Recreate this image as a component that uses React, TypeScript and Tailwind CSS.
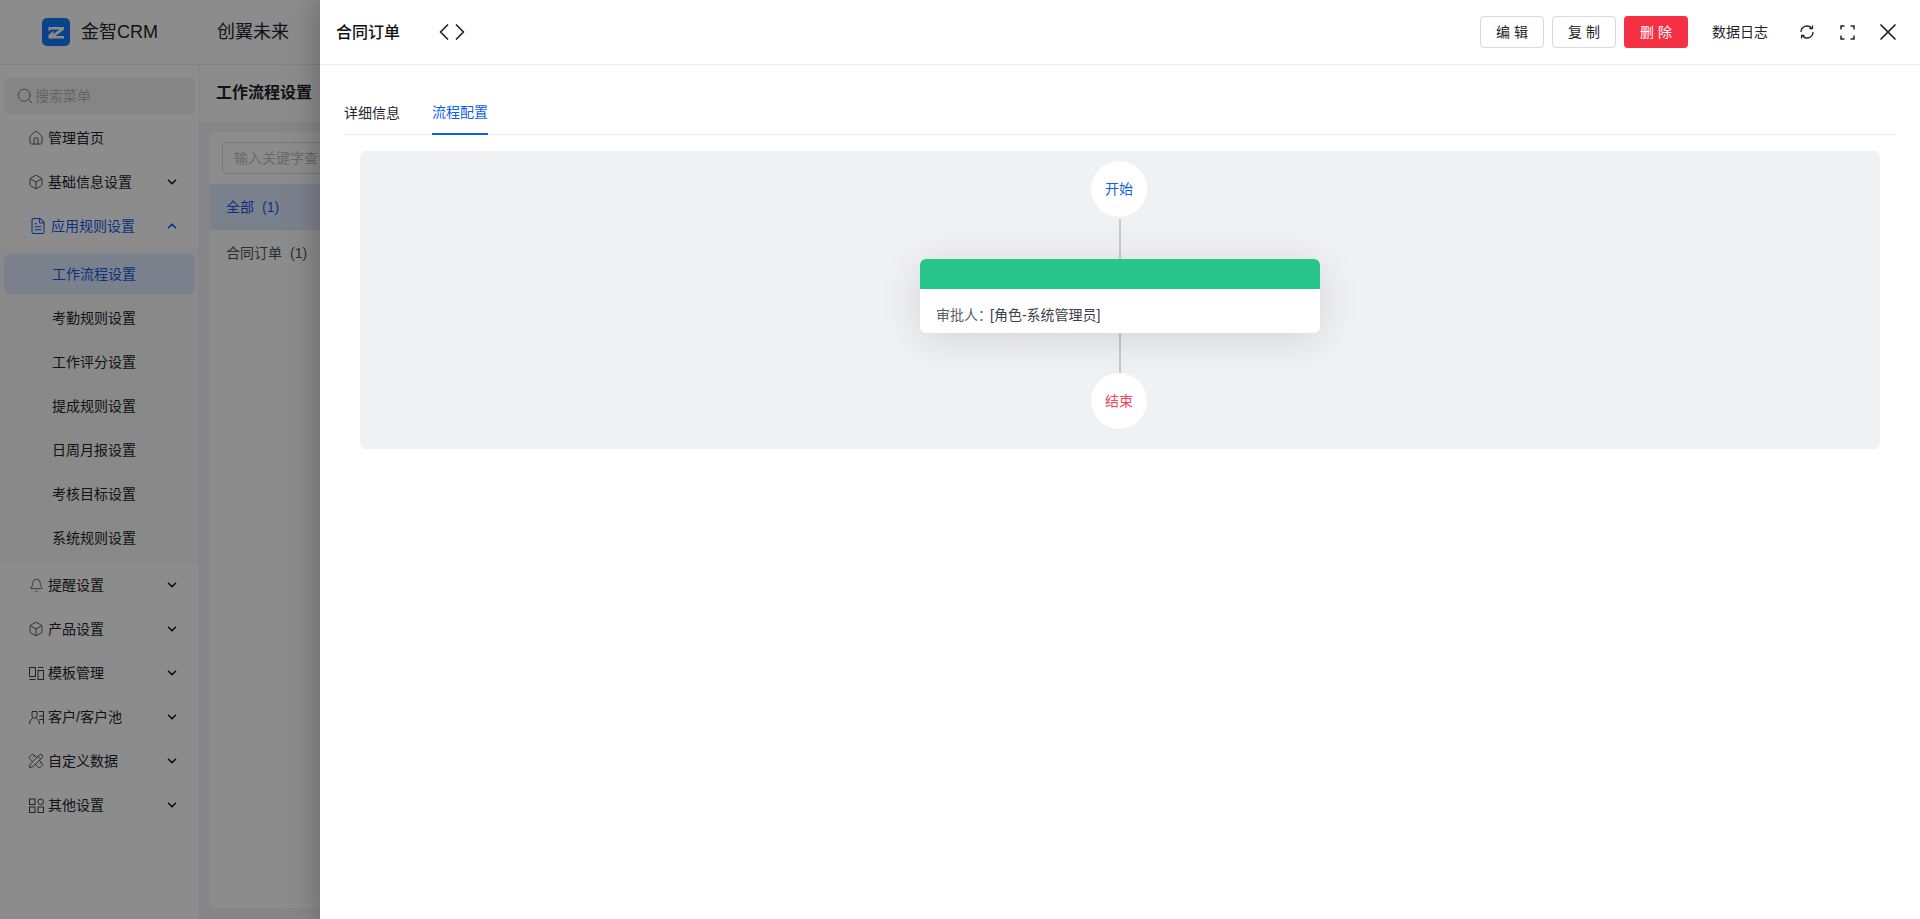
import { Bell, Box, ChevronDown, ChevronLeft, ChevronRight, ChevronUp, FileText, Home, PencilRuler, Search, X } from 'lucide-react'
import type { ReactNode } from 'react'

const font = '[font-family:"Liberation_Sans","Noto_Sans_CJK_SC",sans-serif]'

function TemplateIcon() {
  return (
    <svg width="15" height="15" viewBox="0 0 15 15" fill="none" stroke="currentColor" strokeWidth="1">
      <rect x="0.5" y="1.5" width="6" height="9" />
      <path d="M0.5 13.5h6" />
      <path d="M9 1.5h5.5" />
      <rect x="9" y="4.5" width="5.5" height="9" />
    </svg>
  )
}

function GridIcon() {
  return (
    <svg width="15" height="15" viewBox="0 0 15 15" fill="none" stroke="currentColor" strokeWidth="1">
      <rect x="0.5" y="1" width="5.5" height="5.5" />
      <rect x="0.5" y="9" width="5.5" height="5.5" />
      <rect x="9" y="9" width="5.5" height="5.5" />
      <circle cx="11.7" cy="3.8" r="2.8" />
    </svg>
  )
}

function CustomerIcon() {
  return (
    <svg width="15" height="15" viewBox="0 0 15 15" fill="none" stroke="currentColor" strokeWidth="1">
      <path d="M3 1.5h5v4.2a2.5 2.5 0 0 1-5 0z" />
      <path d="M0.5 14c.3-3 1.6-5 3-5.6M7.5 8.4c1.4.6 2.7 2.6 3 5.6" />
      <path d="M10 1.5h4.5v12.5M10.5 6h4M10.5 9.5h4" />
    </svg>
  )
}

function RefreshIcon() {
  return (
    <svg width="16" height="16" viewBox="0 0 16 16" fill="none" stroke="currentColor" strokeWidth="1.3">
      <path d="M2 8a6 6 0 0 1 10.4-4" />
      <path d="M14 8a6 6 0 0 1-10.4 4" />
      <path d="M13.4 1.6v3h-3" />
      <path d="M2.6 14.4v-3h3" />
    </svg>
  )
}

function CornersIcon() {
  return (
    <svg width="15" height="15" viewBox="0 0 15 15" fill="none" stroke="currentColor" strokeWidth="1.5">
      <path d="M1 4.5V1h3.5M10.5 1H14v3.5M14 10.5V14h-3.5M4.5 14H1v-3.5" />
    </svg>
  )
}

function Logo() {
  return (
    <svg width="28" height="28" viewBox="0 0 28 28">
      <rect width="28" height="28" rx="5" fill="#0f7aff" />
      <path d="M10 9h12v2.4L13.5 18H22v2.5H8.5v-2.3L17.6 11.5H8.5z" fill="#ffffff" />
      <path d="M6.5 9h3.2v1.6L6.5 13.4zM6.5 20.5v-3.4l5-4.3v2.8l-2.4 4.9z" fill="#ffffff" />
    </svg>
  )
}

const topMenus: { icon: ReactNode; label: string; arrow?: boolean }[] = [
  { icon: <Home size={16} strokeWidth={1.3} />, label: '管理首页' },
  { icon: <Box size={16} strokeWidth={1.3} />, label: '基础信息设置', arrow: true },
]

const subMenus = ['工作流程设置', '考勤规则设置', '工作评分设置', '提成规则设置', '日周月报设置', '考核目标设置', '系统规则设置']

const bottomMenus: { icon: ReactNode; label: string }[] = [
  { icon: <Bell size={15} strokeWidth={1.2} />, label: '提醒设置' },
  { icon: <Box size={16} strokeWidth={1.3} />, label: '产品设置' },
  { icon: <TemplateIcon />, label: '模板管理' },
  { icon: <CustomerIcon />, label: '客户/客户池' },
  { icon: <PencilRuler size={16} strokeWidth={1.3} />, label: '自定义数据' },
  { icon: <GridIcon />, label: '其他设置' },
]

function MenuRow({ icon, label, arrow }: { icon: ReactNode; label: string; arrow?: boolean }) {
  return (
    <div className="flex h-11 items-center pl-[28px] pr-[20px] text-sm text-[#1f2329]">
      <span className="mr-[4px] flex w-[16px] justify-center text-[#3c4149]">{icon}</span>
      <span className="flex-1">{label}</span>
      {arrow && <ChevronDown size={14} strokeWidth={3} />}
    </div>
  )
}

function Sidebar() {
  return (
    <aside className="flex w-[200px] shrink-0 flex-col border-r border-[#f0f0f0] bg-white">
      <div className="mx-[4px] mt-[13px] mb-[2px] flex h-[36px] items-center rounded bg-[#f2f3f5] pl-[12px] text-sm text-[#b3b7bd]">
        <Search size={18} strokeWidth={1.3} className="mr-[1px] text-[#71767d]" />
        搜索菜单
      </div>
      {topMenus.map((m) => (
        <MenuRow key={m.label} icon={m.icon} label={m.label} arrow={m.arrow} />
      ))}
      <div className="flex h-11 items-center pl-[29px] pr-[20px] text-sm text-[#0f5ce8]">
        <FileText size={18} strokeWidth={1.4} className="mr-[4px]" />
        <span className="flex-1">应用规则设置</span>
        <ChevronUp size={14} strokeWidth={3} />
      </div>
      <div className="flex flex-col bg-[#fafafa] pb-[3px]">
        {subMenus.map((s, i) => (
          <div key={s} className={i === 0 ? 'mx-[4px] mt-[6px] mb-[2px] flex h-[40px] items-center rounded-md bg-[#e1ecff] pl-[48px] text-sm text-[#0f5ce8]' : 'flex h-11 items-center pl-[52px] text-sm text-[#1f2329]'}>
            {s}
          </div>
        ))}
      </div>
      {bottomMenus.map((m) => (
        <MenuRow key={m.label} icon={m.icon} label={m.label} arrow />
      ))}
    </aside>
  )
}

function Background() {
  return (
    <div className="flex h-full flex-col bg-white">
      <header className="flex h-[65px] shrink-0 items-center border-b border-[#ededed] pl-[42px]">
        <Logo />
        <span className="ml-[11px] text-lg text-[#1f2329]">金智CRM</span>
        <span className="ml-[59px] text-lg text-[#1f2329]">创翼未来</span>
      </header>
      <div className="flex min-h-0 flex-1">
        <Sidebar />
        <main className="flex min-w-0 flex-1 flex-col bg-[#f4f5f7]">
          <div className="flex h-[57px] shrink-0 items-center bg-white pb-[1px] pl-[16px] text-base font-semibold text-[#1f2329]">工作流程设置</div>
          <div className="mt-[10px] ml-[10px] mb-[11px] flex flex-1 flex-col bg-white">
            <div className="px-[12px] py-[10px]">
              <div className="flex h-[32px] w-[300px] items-center rounded border border-[#d9d9d9] px-[11px] text-sm text-[#bfbfbf]">输入关键字查询</div>
            </div>
            <div className="flex h-[46px] items-center bg-[#e1ecff] pl-[16px] text-sm text-[#0f5ce8]">全部<span className="ml-[8px]">(1)</span></div>
            <div className="flex h-[46px] items-center pl-[16px] text-sm text-[#4e5359]">合同订单<span className="ml-[8px]">(1)</span></div>
          </div>
        </main>
      </div>
    </div>
  )
}

function OutlineButton({ children }: { children: ReactNode }) {
  return (
    <button className="flex h-[32px] w-[64px] items-center justify-center rounded border border-[#d9d9d9] bg-white text-sm text-[#1f2329]">{children}</button>
  )
}

function FlowNode({ label, color }: { label: string; color: string }) {
  return <div className={`-ml-[2px] flex h-[56px] w-[56px] items-center justify-center rounded-full bg-white text-sm ${color}`}>{label}</div>
}

function Drawer() {
  return (
    <div className="absolute top-0 right-0 bottom-0 flex w-[1600px] flex-col bg-white shadow-[-6px_0_16px_rgba(0,0,0,0.12),-12px_0_32px_rgba(0,0,0,0.08)]">
      <div className="flex h-[65px] shrink-0 items-center border-b border-[#eeeeee] pl-[16px] pr-[24px]">
        <span className="pt-[1px] text-base font-medium text-[#111111]">合同订单</span>
        <div className="ml-[30px] flex items-center text-[#1f2329]">
          <ChevronLeft size={28} strokeWidth={1.5} className="-mr-[12px]" />
          <ChevronRight size={28} strokeWidth={1.5} />
        </div>
        <div className="ml-auto flex items-center gap-[8px]">
          <OutlineButton>编 辑</OutlineButton>
          <OutlineButton>复 制</OutlineButton>
          <button className="flex h-[32px] w-[64px] items-center justify-center rounded bg-[#f53045] text-sm text-white">删 除</button>
        </div>
        <span className="ml-[24px] text-sm text-[#1f2329]">数据日志</span>
        <span className="ml-[31px] text-[#1f2329]"><RefreshIcon /></span>
        <span className="ml-[25px] text-[#1f2329]"><CornersIcon /></span>
        <X size={28} strokeWidth={1.5} className="ml-[19px] -mr-[6px] text-[#1f2329]" />
      </div>
      <div className="mx-[24px] mt-[24px] flex h-[46px] shrink-0 gap-[32px] border-b border-[#eeeeee] text-sm">
        <div className="flex h-[46px] items-center pt-[1px] text-[#1f2329]">详细信息</div>
        <div className="flex h-[46px] items-center border-b-2 border-[#0f5ff0] pt-[1px] text-[#0f5ff0]">流程配置</div>
      </div>
      <div className="mx-[40px] mt-[16px] flex h-[298px] shrink-0 flex-col items-center rounded-md bg-[#f0f1f5] pt-[10px]">
        <FlowNode label="开始" color="text-[#0f5ff0]" />
        <div className="mt-[2px] h-[40px] w-[2px] bg-[#c8c9cd]" />
        <div className="z-10 w-[400px] overflow-hidden rounded-md bg-white shadow-[0_6px_40px_rgba(0,0,0,0.12)]">
          <div className="h-[30px] bg-[#28c58a]" />
          <div className="flex h-[44px] items-center pt-[8px] pl-[16px] text-sm text-[#5c6066]">审批人：<span className="-ml-[2px] text-[#3c4149]">[角色-系统管理员]</span></div>
        </div>
        <div className="h-[40px] w-[2px] bg-[#c8c9cd]" />
        <FlowNode label="结束" color="text-[#f5455c]" />
      </div>
    </div>
  )
}

export default function App() {
  return (
    <div className={`relative h-[919px] w-[1920px] overflow-hidden ${font}`}>
      <Background />
      <div className="absolute inset-0 bg-black/45" />
      <Drawer />
    </div>
  )
}
